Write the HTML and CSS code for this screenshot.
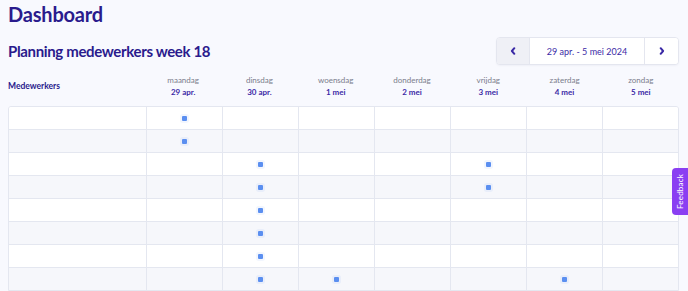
FILE: index.html
```html
<!DOCTYPE html>
<html lang="nl">
<head>
<meta charset="utf-8">
<title>Dashboard</title>
<link rel="stylesheet" href="styles.css">
</head>
<body>
<main class="page">
  <h1 class="page-title">Dashboard</h1>
  <section class="planning">
    <div class="planning-head">
      <h2 class="planning-title">Planning medewerkers week 18</h2>
      <div class="week-nav">
        <button class="nav-btn nav-prev" aria-label="Vorige week">
          <svg width="6" height="8" viewBox="0 0 6 8"><path d="M4.3 1.2 L1.9 4 L4.3 6.8" fill="none" stroke="currentColor" stroke-width="2" stroke-linecap="round" stroke-linejoin="round"/></svg>
        </button>
        <div class="nav-range">29 apr. - 5 mei 2024</div>
        <button class="nav-btn nav-next" aria-label="Volgende week">
          <svg width="6" height="8" viewBox="0 0 6 8"><path d="M1.7 1.2 L4.1 4 L1.7 6.8" fill="none" stroke="currentColor" stroke-width="2" stroke-linecap="round" stroke-linejoin="round"/></svg>
        </button>
      </div>
    </div>

    <div class="grid-head">
      <div class="col-label">Medewerkers</div>
      <div class="day"><span class="day-name">maandag</span><span class="day-date">29 apr.</span></div>
      <div class="day"><span class="day-name">dinsdag</span><span class="day-date">30 apr.</span></div>
      <div class="day"><span class="day-name">woensdag</span><span class="day-date">1 mei</span></div>
      <div class="day"><span class="day-name">donderdag</span><span class="day-date">2 mei</span></div>
      <div class="day"><span class="day-name">vrijdag</span><span class="day-date">3 mei</span></div>
      <div class="day"><span class="day-name">zaterdag</span><span class="day-date">4 mei</span></div>
      <div class="day"><span class="day-name">zondag</span><span class="day-date">5 mei</span></div>
    </div>

    <div class="table">
      <div class="row"><div class="cell name"></div><div class="cell"><span class="dot"></span></div><div class="cell"></div><div class="cell"></div><div class="cell"></div><div class="cell"></div><div class="cell"></div><div class="cell"></div></div>
      <div class="row"><div class="cell name"></div><div class="cell"><span class="dot"></span></div><div class="cell"></div><div class="cell"></div><div class="cell"></div><div class="cell"></div><div class="cell"></div><div class="cell"></div></div>
      <div class="row"><div class="cell name"></div><div class="cell"></div><div class="cell"><span class="dot"></span></div><div class="cell"></div><div class="cell"></div><div class="cell"><span class="dot"></span></div><div class="cell"></div><div class="cell"></div></div>
      <div class="row"><div class="cell name"></div><div class="cell"></div><div class="cell"><span class="dot"></span></div><div class="cell"></div><div class="cell"></div><div class="cell"><span class="dot"></span></div><div class="cell"></div><div class="cell"></div></div>
      <div class="row"><div class="cell name"></div><div class="cell"></div><div class="cell"><span class="dot"></span></div><div class="cell"></div><div class="cell"></div><div class="cell"></div><div class="cell"></div><div class="cell"></div></div>
      <div class="row"><div class="cell name"></div><div class="cell"></div><div class="cell"><span class="dot"></span></div><div class="cell"></div><div class="cell"></div><div class="cell"></div><div class="cell"></div><div class="cell"></div></div>
      <div class="row"><div class="cell name"></div><div class="cell"></div><div class="cell"><span class="dot"></span></div><div class="cell"></div><div class="cell"></div><div class="cell"></div><div class="cell"></div><div class="cell"></div></div>
      <div class="row"><div class="cell name"></div><div class="cell"></div><div class="cell"><span class="dot"></span></div><div class="cell"><span class="dot"></span></div><div class="cell"></div><div class="cell"></div><div class="cell"><span class="dot"></span></div><div class="cell"></div></div>
    </div>
  </section>
</main>
<button class="feedback-tab"><span>Feedback</span></button>
</body>
</html>
```

FILE: styles.css
```css
* { box-sizing: border-box; }

html, body {
  margin: 0;
  padding: 0;
  background: #f8f9fe;
  font-family: "Lato", "Noto Sans", sans-serif;
  color: #2a1b8d;
  overflow: hidden;
}

.page {
  padding: 0 8px;
}

.page-title {
  margin: 0;
  font-size: 20px;
  line-height: 28px;
  font-weight: 700;
  letter-spacing: -0.2px;
  color: #2a1b8d;
}

.planning-head {
  display: flex;
  justify-content: space-between;
  align-items: center;
  margin-top: 9px;
}

.planning-title {
  margin: 0;
  font-size: 15px;
  line-height: 20px;
  font-weight: 700;
  letter-spacing: -0.35px;
  color: #2a1b8d;
}

.week-nav {
  display: flex;
  height: 28px;
  margin-right: 1px;
  border: 1px solid #e4e6ef;
  border-radius: 4px;
  background: #ffffff;
  overflow: hidden;
  box-shadow: 0 1px 2px rgba(30, 30, 80, 0.04);
}

.nav-btn {
  display: flex;
  align-items: center;
  justify-content: center;
  border: 0;
  padding: 0;
  margin: 0;
  color: #3b2aa6;
  background: #ffffff;
  cursor: pointer;
}

.nav-prev {
  width: 33px;
  background: #eff0f6;
  border-right: 1px solid #e4e6ef;
}

.nav-next {
  width: 34px;
  border-left: 1px solid #e4e6ef;
}

.nav-range {
  width: 114px;
  display: flex;
  align-items: center;
  justify-content: center;
  font-size: 9px;
  font-weight: 400;
  color: #3b2aa6;
}

.grid-head {
  display: grid;
  grid-template-columns: 137px repeat(7, 1fr);
  align-items: center;
  height: 41px;
  margin-right: 1px;
}

.col-label {
  font-size: 8.5px;
  font-weight: 700;
  color: #2a1b8d;
  padding-top: 1px;
}

.day {
  display: flex;
  flex-direction: column;
  align-items: center;
  gap: 2px;
}

.day-name {
  font-size: 8px;
  line-height: 10px;
  color: #7b7d8c;
}

.day-date {
  font-size: 8px;
  line-height: 10px;
  font-weight: 700;
  color: #3b2aa6;
}

.table {
  margin-right: 1px;
  border: 1px solid #e4e7f0;
  border-radius: 3px 3px 0 0;
  overflow: hidden;
}

.row {
  display: grid;
  grid-template-columns: 137px repeat(7, 1fr);
  height: 23px;
  background: #ffffff;
  border-top: 1px solid #e4e7f0;
}

.row:first-child {
  border-top: 0;
  height: 22px;
}

.row:nth-child(even) {
  background: #f6f7fb;
}

.cell {
  display: flex;
  align-items: center;
  justify-content: center;
  border-left: 1px solid #e4e7f0;
}

.cell.name {
  border-left: 0;
}

.dot {
  width: 5px;
  height: 5px;
  border-radius: 1px;
  background: #5b8ff0;
  box-shadow: 0 0 0 2px rgba(91, 143, 240, 0.08);
}

.feedback-tab {
  position: fixed;
  right: 0;
  top: 168px;
  width: 16px;
  height: 47px;
  padding: 0;
  border: 0;
  border-radius: 4px 0 0 4px;
  background: #8a3ff2;
  color: #ffffff;
  display: flex;
  align-items: center;
  justify-content: center;
}

.feedback-tab span {
  writing-mode: vertical-rl;
  transform: rotate(180deg);
  font-family: "Lato", "Noto Sans", sans-serif;
  font-size: 8px;
  font-weight: 400;
  letter-spacing: 0.2px;
}
```
